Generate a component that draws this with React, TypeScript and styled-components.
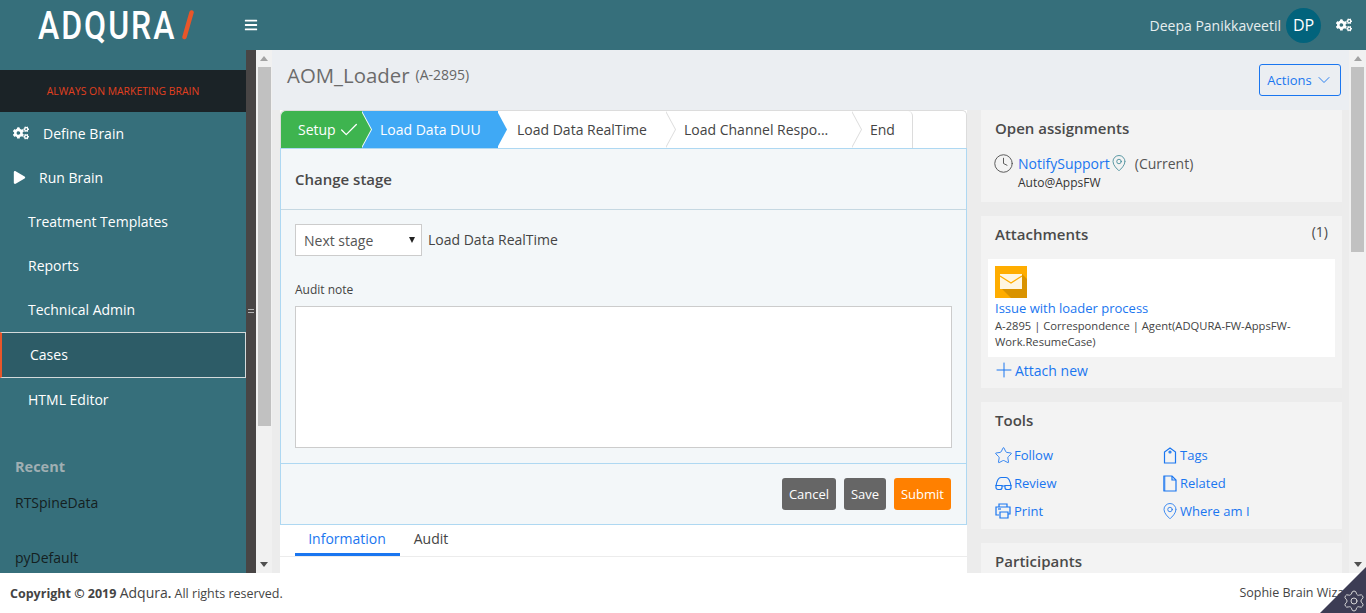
import React from "react";
import styled, { createGlobalStyle } from "styled-components";
import { FaCogs, FaBars, FaPlay } from "react-icons/fa";
import { Check, ChevronDown, Clock, MapPin, Plus, Star, Settings } from "lucide-react";

const GlobalStyle = createGlobalStyle`
  html, body {
    margin: 0;
    height: 100%;
    overflow: hidden;
    background: #fff;
    font-family: "Open Sans", "Liberation Sans", sans-serif;
    font-size: 14px;
    color: #444;
  }
  * { box-sizing: border-box; }
`;

const teal = "#366f7b";
const link = "#1a76f0";

const Page = styled.div`
  height: 613px;
  display: flex;
  flex-direction: column;
  position: relative;
  overflow: hidden;
`;

const Header = styled.header`
  height: 50px;
  flex: none;
  background: ${teal};
  display: flex;
  align-items: center;
  color: #fff;
`;

const LogoBox = styled.div`
  width: 244px;
  padding-left: 38px;
  display: flex;
  align-items: center;
  gap: 5px;
  height: 50px;
`;

const LogoText = styled.span`
  font-family: "Roboto", sans-serif;
  font-size: 32px;
  font-weight: 500;
  letter-spacing: 2px;
  line-height: 50px;
  transform: scaleY(1.22);
  transform-origin: 50% 52%;
  margin-top: 2px;
`;

const Burger = styled.span`
  display: flex;
  color: #fff;
  font-size: 14px;
`;

const HeaderRight = styled.div`
  margin-left: auto;
  padding-right: 14px;
  display: flex;
  align-items: center;
  font-size: 14px;
  color: #e6eeef;
`;

const Avatar = styled.span`
  width: 35px;
  height: 35px;
  border-radius: 50%;
  background: #02637c;
  color: #fff;
  font-size: 16px;
  display: flex;
  align-items: center;
  justify-content: center;
  margin: 0 15px 0 5px;
`;

const Body = styled.div`
  flex: 1;
  min-height: 0;
  display: flex;
`;

const Sidebar = styled.nav`
  width: 246px;
  flex: none;
  background: ${teal};
  padding-top: 20px;
  overflow: hidden;
`;

const Banner = styled.div`
  height: 42px;
  background: #1b2327;
  color: #e2401f;
  font-size: 10.4px;
  display: flex;
  align-items: center;
  justify-content: center;
`;

const MenuItem = styled.div<{ $indent: number; $active?: boolean }>`
  height: ${(p) => (p.$active ? 46 : 44)}px;
  display: flex;
  align-items: center;
  color: #fff;
  font-size: 14px;
  padding-left: ${(p) => p.$indent}px;
  padding-bottom: 2px;
  ${(p) =>
    p.$active &&
    `
    background: #2d5c67;
    border: 1px solid #d3dadb;
    border-left: 2px solid #e8562a;
  `}
`;

const MenuIcon = styled.span<{ $gap: number }>`
  display: flex;
  width: ${(p) => p.$gap}px;
  font-size: 14px;
`;

const RecentTitle = styled.div`
  margin: 35px 0 0 15px;
  font-size: 14.5px;
  font-weight: 700;
  color: #a0afb3;
  line-height: 20px;
`;

const RecentItem = styled.div<{ $top: number }>`
  margin: ${(p) => p.$top}px 0 0 15px;
  font-size: 14px;
  line-height: 20px;
  color: #14201f;
`;

const Splitter = styled.div`
  width: 10px;
  flex: none;
  background: #484545;
  display: flex;
  align-items: center;
  justify-content: center;
`;

const Grip = styled.span`
  width: 6px;
  height: 4px;
  margin-bottom: 1px;
  border-top: 1px solid #b5b5b5;
  border-bottom: 1px solid #b5b5b5;
`;

const ScrollTrack = styled.div<{ $w: number }>`
  flex: none;
  width: ${(p) => p.$w}px;
  background: #f1f1f1;
  display: flex;
  flex-direction: column;
  align-items: center;
  padding-top: 6px;

  &::before {
    content: "";
    width: 0;
    height: 0;
    border: 4px solid transparent;
    border-top: 0;
    border-bottom: 5px solid #a3a3a3;
  }
`;

const ScrollThumb = styled.div<{ $h: number }>`
  width: 13px;
  height: ${(p) => p.$h}px;
  margin-top: 6px;
  background: #c1c1c1;
`;

const ScrollDown = styled.div`
  margin-top: auto;
  margin-bottom: 6px;
  width: 0;
  height: 0;
  border: 4px solid transparent;
  border-bottom: 0;
  border-top: 5px solid #505050;
`;

const Content = styled.main`
  flex: 1;
  min-width: 0;
  background: #ececec;
  overflow: hidden;
`;

const TitleBand = styled.div`
  height: 60px;
  background: #ebeef2;
  display: flex;
  justify-content: space-between;
  padding: 14px 8px 0 15px;
`;

const Title = styled.h1`
  margin: -1px 0 0;
  font-size: 20.4px;
  font-weight: 400;
  color: #6b6b6b;
  height: 24px;
  line-height: 24px;
  display: flex;
  align-items: center;
  gap: 6px;
`;

const TitleId = styled.span`
  font-size: 14px;
  color: #666;
`;

const ActionsButton = styled.button`
  width: 82px;
  height: 32px;
  background: transparent;
  border: 1px solid ${link};
  border-radius: 3px;
  color: ${link};
  font: 400 13px "Open Sans", sans-serif;
  display: flex;
  align-items: center;
  justify-content: center;
  gap: 2px;
  padding: 0 0 0 1px;
`;

const Columns = styled.div`
  display: flex;
  padding-left: 8px;
  gap: 14px;
`;

const LeftColumn = styled.div`
  width: 687px;
  flex: none;
  background: #fff;
  height: 463px;
`;

const StageBar = styled.div`
  height: 38px;
  display: flex;
  background: #fff;
  border: 1px solid #dcdcdc;
  border-bottom: 0;
  border-radius: 5px 5px 0 0;
`;

const Stage = styled.div<{ $w: number; $pad: number; $bg: string; $fg: string; $z: number; $line: string }>`
  width: ${(p) => p.$w}px;
  flex: none;
  height: 37px;
  padding-left: ${(p) => p.$pad}px;
  display: flex;
  align-items: center;
  gap: 2px;
  background: ${(p) => p.$bg};
  color: ${(p) => p.$fg};
  position: relative;
  z-index: ${(p) => p.$z};
  font-size: 14px;

  &::before,
  &::after {
    content: "";
    position: absolute;
    top: 0;
    height: 37px;
    width: 10px;
    clip-path: polygon(0 0, 100% 50%, 0 100%);
  }
  &::before {
    right: -10px;
    background: ${(p) => p.$line};
  }
  &::after {
    right: -9px;
    background: ${(p) => p.$bg};
  }
`;

const FirstStage = styled(Stage)`
  border-top-left-radius: 5px;
`;

const EndStage = styled.div`
  width: 61px;
  flex: none;
  height: 37px;
  padding-left: 18px;
  display: flex;
  align-items: center;
  border-right: 1px solid #dcdcdc;
  border-top-right-radius: 5px;
`;

const Panel = styled.section`
  height: 377px;
  background: #f3f7f9;
  border: 1px solid #aed8f2;
`;

const PanelHead = styled.div`
  height: 61px;
  padding-left: 14px;
  display: flex;
  align-items: center;
  font-size: 15px;
  font-weight: 600;
  color: #4a4a4a;
  border-bottom: 1px solid #c5d8e2;
`;

const StageRow = styled.div`
  display: flex;
  align-items: center;
  margin: 14px 0 0 14px;
  gap: 6px;
  height: 32px;
`;

const StageName = styled.span`
  margin-top: -2px;
`;

const SelectWrap = styled.span`
  position: relative;
  display: block;
  height: 32px;

  &::after {
    content: "";
    position: absolute;
    top: 13px;
    right: 7px;
    border: 3.5px solid transparent;
    border-bottom: 0;
    border-top: 6px solid #222;
  }
`;

const StageSelect = styled.select`
  display: block;
  width: 127px;
  height: 32px;
  appearance: none;
  background: #fff;
  border: 1px solid #ccc;
  border-radius: 0;
  padding-left: 8px;
  font: 400 14px "Open Sans", sans-serif;
  color: #555;
`;

const FieldLabel = styled.label`
  display: block;
  margin: 25px 0 7px 14px;
  font-size: 12px;
  line-height: 18px;
  color: #444;
`;

const Note = styled.textarea`
  display: block;
  margin-left: 14px;
  width: 657px;
  height: 142px;
  background: #fff;
  border: 1px solid #ccc;
  resize: none;
`;

const PanelFoot = styled.div`
  margin-top: 15px;
  height: 60px;
  border-top: 1px solid #aed8f2;
  display: flex;
  justify-content: flex-end;
  align-items: center;
  gap: 8px;
  padding: 0 15px 0 0;
`;

const Button = styled.button<{ $w: number; $bg: string }>`
  width: ${(p) => p.$w}px;
  height: 32px;
  background: ${(p) => p.$bg};
  color: #fff;
  border: 0;
  border-radius: 3px;
  padding: 0;
  font: 500 13px "Open Sans", sans-serif;
`;

const Tabs = styled.div`
  height: 32px;
  display: flex;
  padding-left: 15px;
  border-bottom: 1px solid #ececec;
`;

const Tab = styled.div<{ $active?: boolean; $w: number }>`
  width: ${(p) => p.$w}px;
  height: 31px;
  display: flex;
  align-items: center;
  justify-content: center;
  font-size: 14px;
  padding: 0 ${(p) => (p.$active ? 1 : 0)}px 1px 0;
  color: ${(p) => (p.$active ? link : "#444")};
  border-bottom: 3px solid ${(p) => (p.$active ? link : "transparent")};
`;

const RightColumn = styled.aside`
  width: 361px;
  flex: none;
  display: flex;
  flex-direction: column;
  gap: 14px;
`;

const Card = styled.section<{ $h: number }>`
  height: ${(p) => p.$h}px;
  flex: none;
  background: #f3f3f3;
  padding: 0 14px;
`;

const CardHead = styled.div`
  height: 36px;
  margin-bottom: 1px;
  display: flex;
  justify-content: space-between;
  align-items: center;
  font-size: 15px;
  font-weight: 600;
  color: #4a4a4a;
`;

const Count = styled.span`
  font-weight: 400;
  font-size: 14px;
  margin: -6px 0 0 0;
`;

const AssignRow = styled.div`
  display: flex;
  align-items: center;
  height: 20px;
  margin-top: 7px;
  font-size: 14px;
  color: #555;

  & > svg:first-child {
    margin: 0 4px 0 -2px;
  }
`;

const BlueLink = styled.a`
  color: ${link};
  font-size: 14px;
`;

const Current = styled.span`
  color: #555;
  margin-left: 7px;
`;

const Assignee = styled.div`
  margin-left: 23px;
  margin-top: 1px;
  font-size: 12px;
  line-height: 18px;
  color: #333;
`;

const AttachBox = styled.div`
  margin: 7px -7px 0;
  height: 98px;
  background: #fff;
  padding: 7px 7px 0;
`;

const MailIcon = styled.svg`
  display: block;
  width: 32px;
  height: 32px;
`;

const AttachLink = styled.a`
  display: block;
  color: ${link};
  font-size: 13px;
  line-height: 19px;
  margin-top: 1px;
`;

const AttachMeta = styled.div`
  font-size: 11.2px;
  line-height: 16px;
  color: #444;
`;

const AttachNew = styled.a`
  display: flex;
  align-items: center;
  height: 26px;
  color: ${link};
  font-size: 14px;

  & > svg {
    margin: 0 -1px 0 -3px;
  }
`;

const ToolGrid = styled.div`
  display: grid;
  grid-template-columns: 168px 1fr;
  grid-auto-rows: 28px;
  margin-top: 3px;
`;

const Tool = styled.a`
  display: flex;
  align-items: center;
  gap: 2px;
  color: ${link};
  font-size: 13px;
`;

const ToolIcon = styled.span<{ $w: number }>`
  display: flex;
  width: ${(p) => p.$w}px;
  flex: none;
  justify-content: flex-start;
  color: ${link};

  & > svg {
    flex: none;
  }
`;

const Footer = styled.footer`
  height: 40px;
  flex: none;
  background: #fff;
  display: flex;
  justify-content: space-between;
  align-items: center;
  padding: 0 9px 1px 10px;
  font-size: 12.5px;
  color: #444;
`;

const Brand = styled.span`
  font-size: 14px;
  font-weight: 400;
`;

const Corner = styled.div`
  position: absolute;
  right: 0;
  bottom: 0;
  width: 46px;
  height: 46px;
  background: #3c3c54;
  clip-path: polygon(100% 0, 100% 100%, 0 100%);
  display: flex;
  align-items: flex-end;
  justify-content: flex-end;
  color: #d5d5d5;
`;

const TagIcon = () => (
  <svg width="14" height="17" viewBox="0 0 14 17" fill="none" stroke={link} strokeWidth="1.2">
    <path d="M1.500 16V5L7 1l5.500 4v11z" />
    <circle cx="7" cy="5" r="1" />
  </svg>
);

const GlassesIcon = () => (
  <svg width="17" height="16" viewBox="0 0 17 16" fill="none" stroke={link} strokeWidth="1.2">
    <path d="M1 11 C2 5 4 2.500 6 2.500 H11 C13 2.500 15 5 16 11" />
    <path d="M1 10.500h6v2a2 2 0 0 1-2 2H3a2 2 0 0 1-2-2zM10 10.500h6v2a2 2 0 0 1-2 2h-2a2 2 0 0 1-2-2zM7 11h3" />
  </svg>
);

const FileIcon = () => (
  <svg width="14" height="17" viewBox="0 0 14 17" fill="none" stroke={link} strokeWidth="1.2">
    <path d="M1 1h8l4 4v11H1z" />
    <path d="M9 1v4h4" />
    <path d="M1.500 1v15" strokeWidth="2" strokeOpacity="0.5" />
  </svg>
);

const PrintIcon = () => (
  <svg width="16" height="16" viewBox="0 0 16 16" fill="none" stroke={link} strokeWidth="1.2">
    <path d="M4 4V1h8v3M4 12H1V4h14v7h-3" />
    <path d="M5 9h8v6H5z" fill="#f3f3f3" />
    <path d="M3 6h3" />
  </svg>
);

const App = () => {
  return (
    <Page>
      <GlobalStyle />
      <Header>
        <LogoBox>
          <LogoText>ADQURA</LogoText>
          <svg width="14" height="30" viewBox="0 0 14 30">
            <path d="M10.500 2.500 3.500 27" stroke="#e8562a" strokeWidth="4.500" strokeLinecap="round" />
          </svg>
        </LogoBox>
        <Burger>
          <FaBars />
        </Burger>
        <HeaderRight>
          Deepa Panikkaveetil
          <Avatar>DP</Avatar>
          <FaCogs size={16} color="#fff" />
        </HeaderRight>
      </Header>

      <Body>
        <Sidebar>
          <Banner>ALWAYS ON MARKETING BRAIN</Banner>
          <MenuItem $indent={13}>
            <MenuIcon $gap={30}>
              <FaCogs size={16} />
            </MenuIcon>
            Define Brain
          </MenuItem>
          <MenuItem $indent={13}>
            <MenuIcon $gap={26}>
              <FaPlay size={13} />
            </MenuIcon>
            Run Brain
          </MenuItem>
          <MenuItem $indent={28}>Treatment Templates</MenuItem>
          <MenuItem $indent={28}>Reports</MenuItem>
          <MenuItem $indent={28}>Technical Admin</MenuItem>
          <MenuItem $indent={28} $active>
            Cases
          </MenuItem>
          <MenuItem $indent={28}>HTML Editor</MenuItem>
          <RecentTitle>Recent</RecentTitle>
          <RecentItem $top={16}>RTSpineData</RecentItem>
          <RecentItem $top={35}>pyDefault</RecentItem>
        </Sidebar>
        <Splitter>
          <Grip />
        </Splitter>
        <ScrollTrack $w={16}>
          <ScrollThumb $h={359} />
          <ScrollDown />
        </ScrollTrack>

        <Content>
          <TitleBand>
            <Title>
              AOM_Loader <TitleId>(A-2895)</TitleId>
            </Title>
            <ActionsButton>
              Actions <ChevronDown size={20} strokeWidth={1.1} />
            </ActionsButton>
          </TitleBand>
          <Columns>
            <LeftColumn>
              <StageBar>
                <FirstStage $w={81} $pad={17} $bg="#3eb44f" $fg="#fff" $z={6} $line="#fff">
                  Setup <Check size={22} strokeWidth={1.4} />
                </FirstStage>
                <Stage $w={136} $pad={18} $bg="#3fa9f5" $fg="#fff" $z={5} $line="#fff">
                  Load Data DUU
                </Stage>
                <Stage $w={168} $pad={19} $bg="#fff" $fg="#444" $z={4} $line="#dcdcdc">
                  Load Data RealTime
                </Stage>
                <Stage $w={186} $pad={18} $bg="#fff" $fg="#444" $z={3} $line="#dcdcdc">
                  Load Channel Respo...
                </Stage>
                <EndStage>End</EndStage>
              </StageBar>
              <Panel>
                <PanelHead>Change stage</PanelHead>
                <StageRow>
                  <SelectWrap>
                    <StageSelect defaultValue="next">
                      <option value="next">Next stage</option>
                    </StageSelect>
                  </SelectWrap>
                  <StageName>Load Data RealTime</StageName>
                </StageRow>
                <FieldLabel>Audit note</FieldLabel>
                <Note readOnly />
                <PanelFoot>
                  <Button $w={54} $bg="#666">
                    Cancel
                  </Button>
                  <Button $w={42} $bg="#666">
                    Save
                  </Button>
                  <Button $w={57} $bg="#ff8000">
                    Submit
                  </Button>
                </PanelFoot>
              </Panel>
              <Tabs>
                <Tab $active $w={105}>
                  Information
                </Tab>
                <Tab $w={62}>Audit</Tab>
              </Tabs>
            </LeftColumn>

            <RightColumn>
              <Card $h={92}>
                <CardHead>Open assignments</CardHead>
                <AssignRow>
                  <Clock size={21} strokeWidth={1.1} color="#555" />
                  <BlueLink>NotifySupport</BlueLink>
                  <MapPin size={18} strokeWidth={1.1} color="#3b8794" />
                  <Current>(Current)</Current>
                </AssignRow>
                <Assignee>Auto@AppsFW</Assignee>
              </Card>

              <Card $h={172}>
                <CardHead>
                  Attachments <Count>(1)</Count>
                </CardHead>
                <AttachBox>
                  <MailIcon viewBox="0 0 32 32">
                    <rect width="32" height="32" fill="#ffad00" />
                    <path d="M5 21 16 32h16V13L27 8z" fill="#d99300" />
                    <rect x="5" y="8" width="22" height="15" fill="#fff6e2" />
                    <path d="M5 10 16 17 27 10" fill="none" stroke="#ffad00" strokeWidth="1.300" />
                  </MailIcon>
                  <AttachLink>Issue with loader process</AttachLink>
                  <AttachMeta>
                    A-2895 | Correspondence | Agent(ADQURA-FW-AppsFW-
                    <br />
                    Work.ResumeCase)
                  </AttachMeta>
                </AttachBox>
                <AttachNew>
                  <Plus size={24} strokeWidth={1} />
                  Attach new
                </AttachNew>
              </Card>

              <Card $h={127}>
                <CardHead>Tools</CardHead>
                <ToolGrid>
                  <Tool>
                    <ToolIcon $w={17}>
                      <Star size={19} strokeWidth={1.1} style={{ marginLeft: -1 }} />
                    </ToolIcon>
                    Follow
                  </Tool>
                  <Tool>
                    <ToolIcon $w={15}>
                      <TagIcon />
                    </ToolIcon>
                    Tags
                  </Tool>
                  <Tool>
                    <ToolIcon $w={17}>
                      <GlassesIcon />
                    </ToolIcon>
                    Review
                  </Tool>
                  <Tool>
                    <ToolIcon $w={15}>
                      <FileIcon />
                    </ToolIcon>
                    Related
                  </Tool>
                  <Tool>
                    <ToolIcon $w={17}>
                      <PrintIcon />
                    </ToolIcon>
                    Print
                  </Tool>
                  <Tool>
                    <ToolIcon $w={15}>
                      <MapPin size={18} strokeWidth={1.1} style={{ marginLeft: -2 }} />
                    </ToolIcon>
                    Where am I
                  </Tool>
                </ToolGrid>
              </Card>

              <Card $h={120}>
                <CardHead>Participants</CardHead>
              </Card>
            </RightColumn>
          </Columns>
        </Content>

        <ScrollTrack $w={17}>
          <ScrollThumb $h={185} />
          <ScrollDown />
        </ScrollTrack>
      </Body>

      <Footer>
        <span>
          <b>Copyright © 2019</b> <Brand>Adqura</Brand>
          <b>.</b> All rights reserved.
        </span>
        <span>Sophie Brain Wizard</span>
      </Footer>
      <Corner>
        <Settings size={24} strokeWidth={1} />
      </Corner>
    </Page>
  );
};

export default App;
